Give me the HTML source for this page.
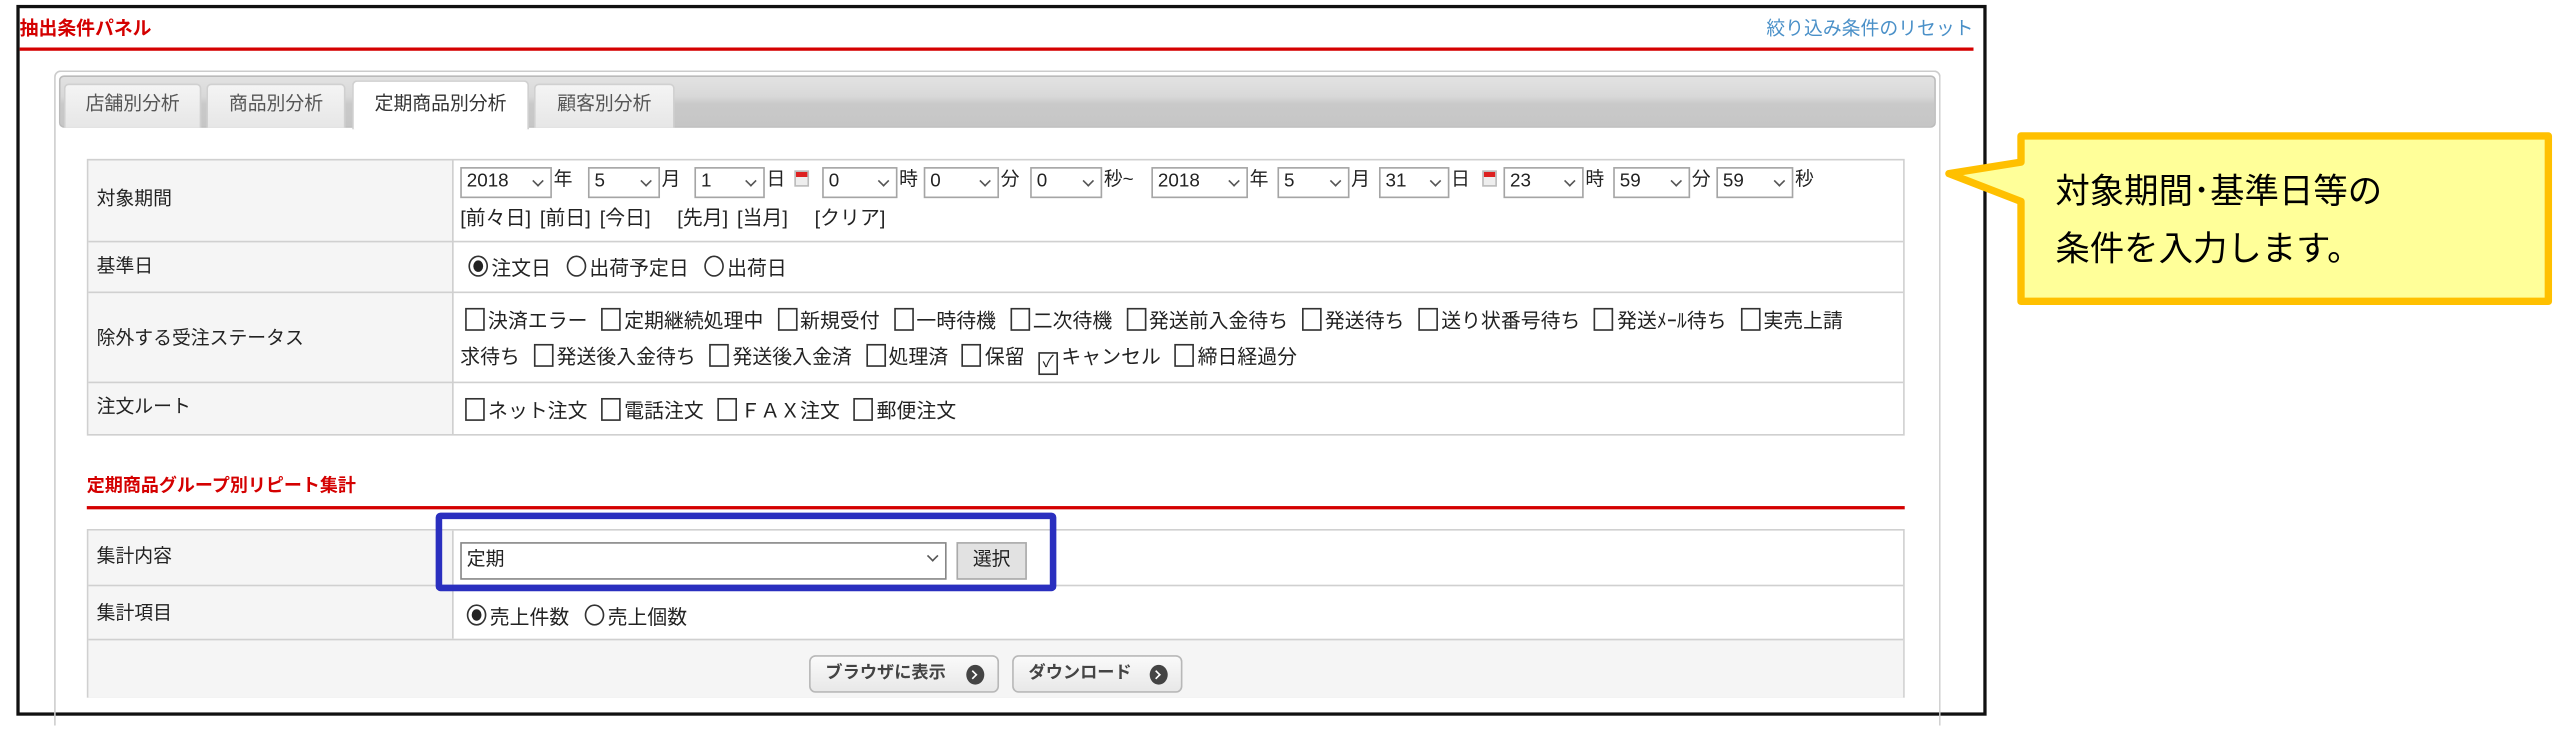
<!DOCTYPE html>
<html><head><meta charset="utf-8"><style>
html,body{margin:0;padding:0;background:#fff;}
body{width:2568px;height:732px;overflow:hidden;position:relative;}
#s{position:absolute;left:0;top:0;width:1568px;height:447px;transform:scale(1.63776);transform-origin:0 0;font-family:"Liberation Sans","Noto Sans CJK JP",sans-serif;font-size:11px;color:#222;}
.a{position:absolute;}
.sel{position:absolute;height:19px;border:1px solid #a5a5a5;background:#fff;box-sizing:border-box;font-size:11.5px;line-height:17px;padding-left:3px;}
.sel:after{content:"";position:absolute;right:5px;top:5px;width:4px;height:4px;border-right:1px solid #555;border-bottom:1px solid #555;transform:rotate(45deg);}
.t{position:absolute;font-size:11.5px;line-height:19px;}
.v{font-size:12.1px;letter-spacing:0.05px;}
.cal{position:absolute;width:9px;height:10px;border:1px solid #bbb;background:linear-gradient(#d22 0 3px,#eee 3px);box-sizing:border-box;}
.lab{position:absolute;background:#f5f5f5;}
.cb{display:inline-block;width:10px;height:12px;border:1px solid #333;vertical-align:-2px;margin:0 2px 0 5px;background:#fff;position:relative;}
.rd{display:inline-block;width:10px;height:11px;border:1px solid #333;border-radius:50%;vertical-align:-1px;margin:0 2px 0 6px;background:#fff;position:relative;}
.rd.on:after{content:"";position:absolute;left:2px;top:2px;width:6px;height:7px;border-radius:50%;background:#222;}
.tab{position:absolute;top:51px;height:27px;background:linear-gradient(#f4f4f4,#e6e6e6);border:1px solid #d0d0d0;border-bottom:none;border-radius:3px 3px 0 0;box-sizing:border-box;text-align:center;line-height:25px;font-size:11.5px;color:#555;}
.btn{position:absolute;height:23px;border:1px solid #b8b8b8;border-radius:4px;background:linear-gradient(#fafafa,#e8e8e8);box-sizing:border-box;font-size:10.5px;font-weight:bold;color:#444;line-height:21px;padding-left:9px;}
.btn i{position:absolute;right:8px;top:5px;width:11px;height:12px;border-radius:50%;background:#444;}
.btn i:after{content:"";position:absolute;left:2px;top:4px;width:3px;height:3px;border-right:1.5px solid #fff;border-top:1.5px solid #fff;transform:rotate(45deg);}
</style></head><body><div id="s">
<div class="a" style="left:10px;top:3px;width:1203px;height:434px;border:2px solid #111;box-sizing:border-box;"></div>
<div class="a" style="left:12px;top:9px;color:#d40000;font-weight:bold;font-size:11.5px;">抽出条件パネル</div>
<div class="a" style="right:363px;top:9px;color:#4a90c8;font-size:11.5px;">絞り込み条件のリセット</div>
<div class="a" style="left:12px;top:29px;width:1193px;height:2px;background:#d40000;"></div>
<div class="a" style="left:33px;top:43px;width:1152px;height:400px;border:1px solid #ccc;border-bottom:none;border-radius:4px 4px 0 0;box-sizing:border-box;"></div>
<div class="a" style="left:36px;top:46px;width:1146px;height:32px;border:1px solid #bbb;border-radius:3px;background:linear-gradient(#e2e2e2,#d8d8d8 40%,#c9c9c9 55%,#c6c6c6);box-sizing:border-box;"></div>
<div class="tab" style="left:39px;width:84px;">店舗別分析</div>
<div class="tab" style="left:126px;width:85px;">商品別分析</div>
<div class="tab" style="left:215px;width:108px;top:49px;height:30px;background:#fff;color:#333;line-height:28px;">定期商品別分析</div>
<div class="tab" style="left:326px;width:86px;">顧客別分析</div>
<div class="a" style="left:53px;top:97px;width:1110px;height:169px;border:1px solid #d0d0d0;box-sizing:border-box;"></div>
<div class="lab" style="left:54px;top:98px;width:222px;height:167px;border-right:1px solid #d0d0d0;"></div>
<div class="a" style="left:54px;top:147px;width:1108px;height:1px;background:#d0d0d0;"></div>
<div class="a" style="left:54px;top:178px;width:1108px;height:1px;background:#d0d0d0;"></div>
<div class="a" style="left:54px;top:233px;width:1108px;height:1px;background:#d0d0d0;"></div>
<div class="t" style="left:59px;top:113px;">対象期間</div>
<div class="t" style="left:59px;top:154px;">基準日</div>
<div class="t" style="left:59px;top:198px;">除外する受注ステータス</div>
<div class="t" style="left:59px;top:240px;">注文ルート</div>
<div class="sel" style="left:281px;top:102px;width:56px;">2018</div><div class="t" style="left:338px;top:101px;">年</div>
<div class="sel" style="left:359px;top:102px;width:44px;">5</div><div class="t" style="left:404px;top:101px;">月</div>
<div class="sel" style="left:424px;top:102px;width:43px;">1</div><div class="t" style="left:468px;top:101px;">日</div>
<div class="cal" style="left:485px;top:104px;"></div>
<div class="sel" style="left:502px;top:102px;width:46px;">0</div><div class="t" style="left:549px;top:101px;">時</div>
<div class="sel" style="left:564px;top:102px;width:46px;">0</div><div class="t" style="left:611px;top:101px;">分</div>
<div class="sel" style="left:629px;top:102px;width:44px;">0</div><div class="t" style="left:674px;top:101px;">秒~</div>
<div class="sel" style="left:703px;top:102px;width:59px;">2018</div><div class="t" style="left:763px;top:101px;">年</div>
<div class="sel" style="left:780px;top:102px;width:44px;">5</div><div class="t" style="left:825px;top:101px;">月</div>
<div class="sel" style="left:842px;top:102px;width:43px;">31</div><div class="t" style="left:886px;top:101px;">日</div>
<div class="cal" style="left:905px;top:104px;"></div>
<div class="sel" style="left:918px;top:102px;width:49px;">23</div><div class="t" style="left:968px;top:101px;">時</div>
<div class="sel" style="left:985px;top:102px;width:47px;">59</div><div class="t" style="left:1033px;top:101px;">分</div>
<div class="sel" style="left:1048px;top:102px;width:47px;">59</div><div class="t" style="left:1096px;top:101px;">秒</div>
<div class="t v" style="left:281px;top:124px;word-spacing:2px;white-space:pre;">[前々日] [前日] [今日]   [先月] [当月]   [クリア]</div>
<div class="t v" style="left:280px;top:155px;"><span class="rd on"></span>注文日 <span class="rd"></span>出荷予定日 <span class="rd"></span>出荷日</div>
<div class="t v" style="left:279px;top:187px;white-space:nowrap;"><span class="cb"></span>決済エラー <span class="cb"></span>定期継続処理中 <span class="cb"></span>新規受付 <span class="cb"></span>一時待機 <span class="cb"></span>二次待機 <span class="cb"></span>発送前入金待ち <span class="cb"></span>発送待ち <span class="cb"></span>送り状番号待ち <span class="cb"></span>発送ﾒｰﾙ待ち <span class="cb"></span>実売上請</div>
<div class="t v" style="left:281px;top:209px;white-space:nowrap;">求待ち <span class="cb"></span>発送後入金待ち <span class="cb"></span>発送後入金済 <span class="cb"></span>処理済 <span class="cb"></span>保留 <span class="cb" style="text-align:center;font-size:10px;line-height:11px;">✓</span>キャンセル <span class="cb"></span>締日経過分</div>
<div class="t v" style="left:279px;top:242px;white-space:nowrap;"><span class="cb"></span>ネット注文 <span class="cb"></span>電話注文 <span class="cb"></span>ＦＡＸ注文 <span class="cb"></span>郵便注文</div>
<div class="a" style="left:53px;top:288px;color:#d40000;font-weight:bold;font-size:11px;">定期商品グループ別リピート集計</div>
<div class="a" style="left:53px;top:309px;width:1110px;height:2px;background:#d40000;"></div>
<div class="a" style="left:53px;top:323px;width:1110px;height:103px;border:1px solid #d0d0d0;box-sizing:border-box;"></div>
<div class="lab" style="left:54px;top:324px;width:222px;height:66px;border-right:1px solid #d0d0d0;"></div>
<div class="a" style="left:54px;top:357px;width:1108px;height:1px;background:#d0d0d0;"></div>
<div class="a" style="left:54px;top:390px;width:1108px;height:35px;background:#f5f5f5;border-top:1px solid #d0d0d0;"></div>
<div class="t" style="left:59px;top:331px;">集計内容</div>
<div class="t" style="left:59px;top:366px;">集計項目</div>
<div class="sel" style="left:281px;top:331px;width:297px;height:23px;line-height:21px;border-color:#888;">定期</div>
<div class="a" style="left:584px;top:331px;width:43px;height:23px;background:#e2e2e2;border:1px solid #aaa;box-sizing:border-box;text-align:center;line-height:21px;font-size:11.5px;">選択</div>
<div class="a" style="left:266px;top:313px;width:379px;height:48px;border:4px solid #2a2fbf;border-radius:3px;box-sizing:border-box;"></div>
<div class="t v" style="left:279px;top:368px;"><span class="rd on"></span>売上件数 <span class="rd"></span>売上個数</div>
<div class="btn" style="left:494px;top:400px;width:116px;">ブラウザに表示<i></i></div>
<div class="btn" style="left:618px;top:400px;width:104px;">ダウンロード<i></i></div>
<svg class="a" style="left:1180px;top:75px;" width="385" height="120" viewBox="0 0 385 120">
<path d="M54 8 H376 V109 H54 V48 L10 31 L54 24 Z" fill="#ffff99" stroke="#ffc000" stroke-width="4.5" stroke-linejoin="round"/>
</svg>
<div class="a" style="left:1255px;top:100px;font-size:21px;line-height:35px;color:#000;">対象期間･基準日等の<br>条件を入力します。</div>
</div></body></html>
